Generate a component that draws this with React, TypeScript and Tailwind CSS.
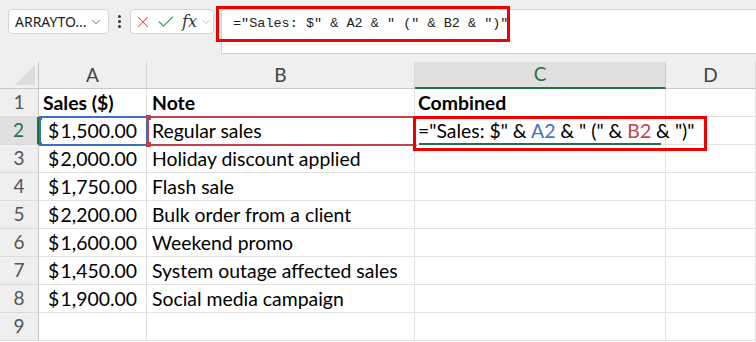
import { ChevronDown, X, Check } from "lucide-react";

const rows: [string, string][] = [
  ["1,500.00", "Regular sales"],
  ["2,000.00", "Holiday discount applied"],
  ["1,750.00", "Flash sale"],
  ["2,200.00", "Bulk order from a client"],
  ["1,600.00", "Weekend promo"],
  ["1,450.00", "System outage affected sales"],
  ["1,900.00", "Social media campaign"],
];

const cell = "h-[28px] border-r border-b border-[#e1e1e1] bg-white flex items-center text-[19.4px] text-black whitespace-nowrap";
const rowHead = "h-[28px] border-r border-b border-r-[#c4c4c4] border-b-[#dcdcdc] bg-[#efefef] flex items-center justify-center text-[19px] text-[#555]";

function FormulaBar() {
  return (
    <div className="relative h-[62px] bg-[#efefef] font-['Noto_Sans',sans-serif]">
      <div className="flex items-start pt-[9px] pl-[8px]">
        <div className="flex h-[25px] w-[101px] items-center justify-between rounded-[4px] border border-[#d4d4d4] bg-white pl-[6px] pr-[5px] text-[14px] text-[#222]">
          <span>ARRAYTO...</span>
          <ChevronDown className="h-[14px] w-[14px] text-[#555]" strokeWidth={1.5} />
        </div>
        <div className="flex h-[25px] w-[21px] flex-col items-center justify-center gap-[2px]">
          <span className="h-[3px] w-[3px] rounded-full bg-[#333]" />
          <span className="h-[3px] w-[3px] rounded-full bg-[#333]" />
          <span className="h-[3px] w-[3px] rounded-full bg-[#333]" />
        </div>
        <div className="flex h-[25px] w-[84px] items-center rounded-[4px] border border-[#d4d4d4] bg-white pl-[3px]">
          <X className="h-[18px] w-[18px] text-[#e34a4a]" strokeWidth={1.4} />
          <Check className="ml-[4px] h-[20px] w-[20px] text-[#3c9a5a]" strokeWidth={1.4} />
          <span className="ml-[6px] font-['DejaVu_Serif',serif] text-[16px] italic leading-none text-[#333]">fx</span>
          <ChevronDown className="ml-[3px] h-[12px] w-[12px] text-[#aaa]" strokeWidth={1.5} />
        </div>
        <div className="ml-[7px] flex h-[45px] flex-1 items-start rounded-tl-[4px] border border-r-0 border-[#d0d0d0] bg-white pl-[11px] pt-[4px]">
          <span className="font-['Liberation_Mono',monospace] text-[13.5px] leading-[20px] whitespace-pre text-[#222]">
            ="Sales: $" &amp; A2 &amp; " (" &amp; B2 &amp; ")"
          </span>
        </div>
      </div>
      <div className="pointer-events-none absolute left-[216px] top-[6px] h-[36px] w-[294px] border-[3px] border-[#ee0000]" />
    </div>
  );
}

export default function App() {
  return (
    <div className="h-[342px] w-[756px] overflow-hidden bg-white">
      <FormulaBar />
      <div className="relative grid grid-cols-[39px_108px_268px_251px_90px] font-['Lato',sans-serif]">
        {/* column headers */}
        <div className="relative h-[27px] border-r border-b border-r-[#c4c4c4] border-b-[#c8c8c8] bg-[#efefef]">
          <svg className="absolute right-[3px] bottom-[3px]" width="20" height="20" viewBox="0 0 20 20">
            <polygon points="0,20 20,20 20,0" fill="#dcdcdc" />
          </svg>
        </div>
        {["A", "B", "C", "D"].map((c) =>
          c === "C" ? (
            <div key={c} className="flex h-[27px] items-center justify-center border-r border-b-2 border-r-[#c8c8c8] border-b-[#217346] bg-[#e0e0e0] text-[19px] text-[#217346]">
              {c}
            </div>
          ) : (
            <div key={c} className="flex h-[27px] items-center justify-center border-r border-b border-r-[#d8d8d8] border-b-[#c8c8c8] bg-[#efefef] text-[19px] text-[#444]">
              {c}
            </div>
          )
        )}

        {/* row 1 */}
        <div className={rowHead}>1</div>
        <div className={`${cell} pl-[4px] font-bold`}>Sales ($)</div>
        <div className={`${cell} pl-[5px] font-bold`}>Note</div>
        <div className={`${cell} pl-[3px] font-bold`}>Combined</div>
        <div className={cell} />

        {rows.map(([amt, note], i) => {
          const r = i + 2;
          const active = r === 2;
          return (
            <div key={r} className="contents">
              <div className={active ? "flex h-[28px] items-center justify-center border-r-2 border-b border-r-[#217346] border-b-[#dcdcdc] bg-[#e0e0e0] text-[19px] text-[#217346]" : rowHead}>
                {r}
              </div>
              <div className={`${cell} justify-between pl-[9px] pr-[9px] ${active ? "bg-[#eaeff8]" : ""}`}>
                <span>$</span>
                <span>{amt}</span>
              </div>
              <div className={`${cell} pl-[5px] ${active ? "bg-[#fbe8e8]" : ""}`}>{note}</div>
              {active ? (
                <div className={`${cell} relative z-10 overflow-visible pl-[3px]`}>
                  <span>
                    ="Sales: $" &amp; <span className="text-[#3b72c6]">A2</span> &amp; " (" &amp;{" "}
                    <span className="text-[#c8404c]">B2</span> &amp; ")"
                  </span>
                  <span className="ml-[2px] h-[22px] w-[1px] bg-black" />
                  <span className="absolute bottom-[-1px] left-[4px] h-[2px] w-[242px] bg-[#217346]" />
                </div>
              ) : (
                <div className={cell} />
              )}
              <div className={cell} />
            </div>
          );
        })}

        <div className={rowHead}>9</div>
        <div className={cell} />
        <div className={cell} />
        <div className={cell} />
        <div className={cell} />

        {/* A2 selection */}
        <div className="pointer-events-none absolute left-[39px] top-[54px] h-[30px] w-[109px] border-2 border-[#3b6fc4]">
          <span className="absolute -left-[2px] -top-[2px] h-[4px] w-[3px] bg-[#3b6fc4]" />
          <span className="absolute -left-[2px] -bottom-[2px] h-[4px] w-[3px] bg-[#3b6fc4]" />
        </div>
        {/* B2 reference */}
        <div className="pointer-events-none absolute left-[147px] top-[54px] h-[30px] w-[270px] border-2 border-[#c2404a]">
          <span className="absolute -left-[3px] -top-[3px] h-[5px] w-[5px] bg-[#c2404a]" />
          <span className="absolute -left-[3px] -bottom-[3px] h-[5px] w-[5px] bg-[#c2404a]" />
        </div>
        {/* annotation box on C2 */}
        <div className="pointer-events-none absolute left-[413px] top-[54px] z-20 h-[35px] w-[294px] border-[3px] border-[#ee0000]" />
      </div>
    </div>
  );
}
